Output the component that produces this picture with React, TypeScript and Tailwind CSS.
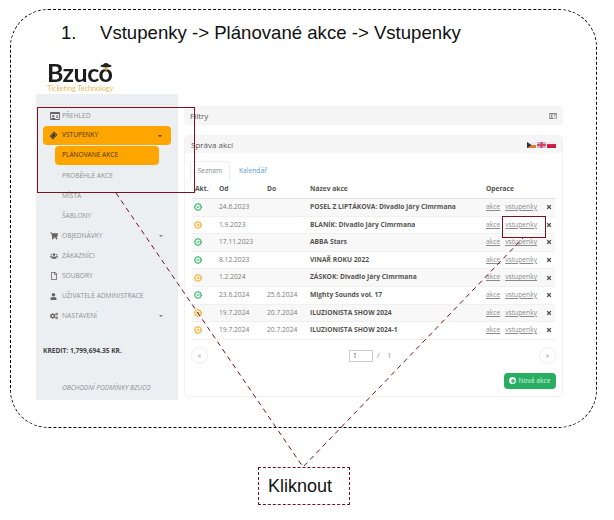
import { ChevronDown, CircleCheck, CircleDot, Plus, X } from 'lucide-react'
import type { ReactNode } from 'react'
import { FaCogs, FaRegFile, FaRegIdCard, FaShoppingCart, FaTicketAlt, FaUser, FaUsers } from 'react-icons/fa'

type EventRow = { active: boolean; from: string; to: string; name: string }

const events: EventRow[] = [
  { active: true, from: '24.6.2023', to: '', name: 'POSEL Z LIPTÁKOVA: Divadlo Járy Cimrmana' },
  { active: false, from: '1.9.2023', to: '', name: 'BLANÍK: Divadlo Járy Cimrmana' },
  { active: true, from: '17.11.2023', to: '', name: 'ABBA Stars' },
  { active: true, from: '8.12.2023', to: '', name: 'VINAŘ ROKU 2022' },
  { active: false, from: '1.2.2024', to: '', name: 'ZÁSKOK: Divadlo Járy Cimrmana' },
  { active: true, from: '23.6.2024', to: '25.6.2024', name: 'Mighty Sounds vol. 17' },
  { active: false, from: '19.7.2024', to: '20.7.2024', name: 'ILUZIONISTA SHOW 2024' },
  { active: false, from: '19.7.2024', to: '20.7.2024', name: 'ILUZIONISTA SHOW 2024-1' },
]

function NavItem({ icon, label, caret, sub }: { icon?: ReactNode; label: string; caret?: boolean; sub?: boolean }) {
  return (
    <div className={`flex h-5 items-center text-[#8b9094] ${sub ? 'pl-[26px]' : 'pl-[14px]'}`}>
      {icon && <span className="flex w-[12px] items-center text-[8px] text-[#666]">{icon}</span>}
      <span>{label}</span>
      {caret && <ChevronDown className="ml-auto mr-[14px] size-[6px] fill-[#666] text-[#666]" />}
    </div>
  )
}

function Sidebar() {
  return (
    <aside className="flex h-[306px] w-[142px] shrink-0 flex-col bg-[#eceff1] pt-3 text-[6.6px] leading-none">
      <NavItem icon={<FaRegIdCard className="size-[10px]" />} label="PŘEHLED" />
      <div className="mx-[7px] flex h-[19px] items-center rounded-sm bg-[#ffa500] pl-[7px] text-[#4c3300]">
        <FaTicketAlt className="mr-[5px] size-[7px] -rotate-45 text-[#333]" />
        <span>VSTUPENKY</span>
        <ChevronDown className="ml-auto mr-2 size-[6px] fill-[#333] text-[#333]" />
      </div>
      <div className="ml-[19px] mt-[1px] flex h-[19px] w-[104px] items-center rounded-sm bg-[#ffa500] pl-[7px] text-[#4c3300]">
        PLÁNOVANÉ AKCE
      </div>
      <div className="mt-[1px]">
        <NavItem sub label="PROBĚHLÉ AKCE" />
        <NavItem sub label="MÍSTA" />
        <NavItem sub label="ŠABLONY" />
        <NavItem icon={<FaShoppingCart />} label="OBJEDNÁVKY" caret />
        <NavItem icon={<FaUsers />} label="ZÁKAZNÍCI" />
        <NavItem icon={<FaRegFile />} label="SOUBORY" />
        <NavItem icon={<FaUser className="size-[7px]" />} label="UŽIVATELÉ ADMINISTRACE" />
        <NavItem icon={<FaCogs />} label="NASTAVENÍ" caret />
      </div>
      <div className="mt-[22px] pl-[7px] font-bold text-[#444]">KREDIT: 1,799,694.35 KR.</div>
      <div className="mt-[30px] pl-[26px] italic text-[#8b9094]">OBCHODNÍ PODMÍNKY BZUCO</div>
    </aside>
  )
}

function Flags() {
  return (
    <div className="flex gap-[1px]">
      <svg width="9" height="6" viewBox="0 0 8 6" preserveAspectRatio="none">
        <rect width="8" height="3" fill="#eee" />
        <rect y="3" width="8" height="3" fill="#e07b2a" />
        <path d="M0 0 4 3 0 6Z" fill="#1f2f55" />
      </svg>
      <svg width="9" height="6" viewBox="0 0 8 6" preserveAspectRatio="none">
        <rect width="8" height="6" fill="#c9b6cc" />
        <path d="M3 0h2v6H3zM0 2h8v2H0z" fill="#d8475f" />
      </svg>
      <svg width="9" height="6" viewBox="0 0 8 6" preserveAspectRatio="none">
        <rect width="8" height="2" fill="#eee" />
        <rect y="2" width="8" height="2" fill="#d6224c" />
        <rect y="4" width="8" height="2" fill="#b81d4a" />
      </svg>
    </div>
  )
}

function EventsTable() {
  return (
    <div className="ml-[7px] mr-[7px] text-[6.7px] leading-none">
      <div className="grid h-[18px] grid-cols-[23px_48px_43px_176px_1fr] items-center border-b border-[#e3e3e3] font-bold text-[#555]">
        <span className="pl-[3px]">Akt.</span>
        <span className="pl-1">Od</span>
        <span className="pl-1">Do</span>
        <span className="pl-1">Název akce</span>
        <span className="pl-1">Operace</span>
      </div>
      {events.map((e, i) => (
        <div
          key={e.name}
          className={`grid h-[17.6px] grid-cols-[23px_48px_43px_176px_1fr] items-center border-b border-[#f0f0f0] ${i % 2 === 0 ? 'bg-[#f8f8f8]' : 'bg-white'}`}
        >
          <span className="pl-[2px]">
            {e.active ? (
              <CircleCheck className="size-2 fill-[#dff3e7] text-[#27ae60]" strokeWidth={3} />
            ) : (
              <CircleDot className="size-2 fill-[#fdeecf] text-[#f5a623]" strokeWidth={3} />
            )}
          </span>
          <span className="pl-1 text-[#7a7a7a]">{e.from}</span>
          <span className="pl-1 text-[#7a7a7a]">{e.to}</span>
          <span className="pl-1 font-bold text-[#555]">{e.name}</span>
          <span className="flex items-center pl-1 text-[#8b8b8b]">
            <span className="underline">akce</span>
            <span className="ml-[5px] underline">vstupenky</span>
            <X className="ml-auto mr-[3px] size-[6px] text-[#555]" strokeWidth={5} />
          </span>
        </div>
      ))}
    </div>
  )
}

function MainPanel() {
  return (
    <main className="flex min-w-0 flex-1 flex-col bg-white pl-[6px] pr-[7px] pt-3">
      <div className="flex h-[19px] items-center justify-between rounded-sm bg-[#f5f5f5] px-[6px] text-[8px] text-[#555]">
        <span>Filtry</span>
        <FaRegIdCard className="size-2 text-[#888]" />
      </div>
      <section className="mt-[10px] h-[262px] rounded-sm border border-[#f2f2f2] bg-white">
        <div className="flex h-[17px] items-center justify-between bg-[#f5f5f5] px-[6px] text-[8px] text-[#555]">
          <span>Správa akcí</span>
          <Flags />
        </div>
        <div className="ml-[5px] mt-2 flex h-5 items-stretch text-[6.7px]">
          <span className="flex w-[40px] items-center justify-center rounded-t-sm border-x border-t border-[#eee] text-[#8a8a8a]">Seznam</span>
          <span className="ml-[9px] flex items-center text-[#5b9bd5]">Kalendář</span>
        </div>
        <EventsTable />
        <div className="mx-[6px] mt-[7px] flex h-[18px] items-center text-[6.7px] text-[#888]">
          <span className="flex size-[17px] items-center justify-center rounded-full border border-[#eee]">«</span>
          <span className="ml-[141px] flex h-[12px] w-[24px] items-center border border-[#ccc] pl-[3px] text-[#555]">1</span>
          <span className="ml-1">/</span>
          <span className="ml-[8px]">1</span>
          <span className="ml-auto flex size-[17px] items-center justify-center rounded-full border border-[#eee]">»</span>
        </div>
        <div className="mr-[6px] mt-[8px] flex justify-end">
          <span className="flex h-4 w-[52px] items-center justify-center gap-[2px] rounded-sm bg-[#27ae60] text-[6.7px] text-[#d9f2e3]">
            <span className="flex size-[7px] items-center justify-center rounded-full bg-white">
              <Plus className="size-[6px] text-[#27ae60]" strokeWidth={5} />
            </span>
            Nová akce
          </span>
        </div>
      </section>
    </main>
  )
}

function Logo() {
  return (
    <div className="relative ml-[36px] h-[34px] w-[80px]">
      <div className="text-[25px] font-bold leading-[24px] tracking-[-0.5px] text-[#1c1c1c] font-['Lato',sans-serif]">Bzuco</div>
      <svg className="absolute left-[53px] top-[1px]" width="12" height="10" viewBox="0 0 12 10">
        <ellipse cx="6" cy="5" rx="5.5" ry="1.4" fill="#222" />
        <path d="M3 5a3 3 0 0 1 6 0Z" fill="#222" />
        <circle cx="6" cy="8" r="1.5" fill="#f5a623" />
      </svg>
      <div className="text-[7.2px] leading-[9px] text-[#f4b459] font-['Lato',sans-serif]">Ticketing Technology</div>
    </div>
  )
}

export default function App() {
  return (
    <div className="relative h-[520px] w-[614px] overflow-hidden bg-white font-['Liberation_Sans',sans-serif] text-black">
      <div className="ml-[10px] mt-[9px] flex h-[419px] w-[587px] flex-col rounded-[38px] border border-dashed border-black">
        <div className="mt-[13px] flex h-5 items-center pl-[50px] text-[18.6px] leading-5 text-[#111]">
          <span className="w-[39px]">1.</span>
          <span>Vstupenky -&gt; Plánované akce -&gt; Vstupenky</span>
        </div>
        <div className="mt-[17px] blur-[0.5px] font-['Open_Sans',sans-serif]">
          <Logo />
          <div className="ml-[25px] flex w-[534px]">
            <Sidebar />
            <MainPanel />
          </div>
        </div>
      </div>
      <div className="ml-[258px] mt-[39px] flex h-[38px] w-[92px] items-center rounded-[1px] border border-dashed border-[#7b1020] pl-[9px] text-[18px] text-[#111]">
        Kliknout
      </div>

      {/* callouts over the screenshot */}
      <div className="absolute left-[37px] top-[107px] h-[86px] w-[158px] border border-[#7b1020]" />
      <div className="absolute left-[502px] top-[216px] h-[22px] w-[44px] border border-[#7b1020]" />
      <svg className="absolute left-0 top-0" width="614" height="520" viewBox="0 0 614 520" fill="none">
        <path d="M116 193 303 467 523 238" stroke="#7b1020" strokeWidth="1" strokeDasharray="5 4" />
      </svg>
    </div>
  )
}
